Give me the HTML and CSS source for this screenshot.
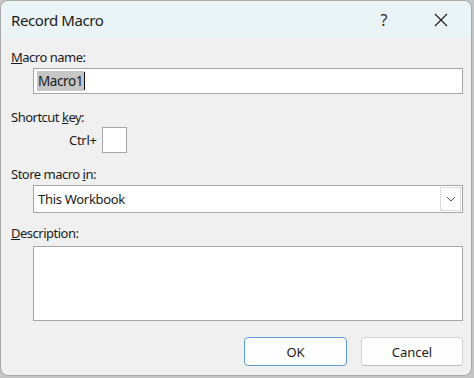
FILE: index.html
```html
<!DOCTYPE html>
<html>
<head>
<meta charset="utf-8">
<link rel="stylesheet" href="styles.css">
</head>
<body>
<div class="window">
  <div class="titlebar">
    <span class="title">Record Macro</span>
    <span class="help">?</span>
    <span class="close">
      <svg width="14" height="14" viewBox="0 0 14 14"><path d="M1 1 L13 13 M13 1 L1 13" stroke="#1f1f1f" stroke-width="1.2" fill="none"/></svg>
    </span>
  </div>
  <div class="content">
    <div class="label l-name"><u>M</u>acro name:</div>
    <div class="field f-name"><span class="sel">Macro1</span><span class="caret"></span></div>
    <div class="label l-key">Shortcut <u>k</u>ey:</div>
    <div class="ctrl-row"><span class="ctrl">Ctrl+</span><span class="keybox"></span></div>
    <div class="label l-store">Store macro <u>i</u>n:</div>
    <div class="field f-store"><span class="val">This Workbook</span>
      <span class="drop"><svg width="10" height="6" viewBox="0 0 10 6"><path d="M1 1 L5 5 L9 1" stroke="#555" stroke-width="1" fill="none"/></svg></span>
    </div>
    <div class="label l-desc"><u>D</u>escription:</div>
    <div class="area"></div>
    <div class="buttons">
      <div class="btn ok">OK</div>
      <div class="btn">Cancel</div>
    </div>
  </div>
</div>
</body>
</html>
```

FILE: styles.css
```css
* { box-sizing: border-box; }
html, body { margin: 0; padding: 0; }
body {
  width: 474px; height: 378px;
  background: #c4c4c4;
  font-family: "Noto Sans", "Open Sans", sans-serif;
  color: #1b1b1b;
}
.window {
  width: 472px; height: 376px;
  border: 1px solid #a8a8a8;
  border-radius: 8px;
  overflow: hidden;
  background: #f0f0f0;
  display: flex; flex-direction: column;
}
.titlebar {
  height: 37px;
  flex: none;
  background: #eaf4f7;
  display: flex; align-items: center;
  padding-left: 10px;
}
.title { font-size: 15px; flex: 1; letter-spacing: -0.4px; }
.help { font-size: 16px; width: 20px; text-align: center; margin-right: 37px; color: #2a2a2a; }
.close { width: 40px; display: flex; justify-content: flex-start; }
.close svg { margin-left: 3px; }
.content {
  padding: 11px 8px 0 10px;
  font-size: 13px;
  line-height: 16px;
}
.label { height: 16px; letter-spacing: -0.5px; }
.field {
  margin-left: 22px;
  background: #fff;
  border: 1px solid #a6a6a6;
  display: flex; align-items: center;
}
.f-name { margin-top: 3px; height: 26px; padding-left: 3px; }
.sel { background: #c6c6c6; padding: 1px 1px 1px 1px; line-height: 18px; font-size: 13.5px; letter-spacing: -0.4px; }
.caret { width: 1px; height: 18px; background: #111; }
.l-key { margin-top: 15px; }
.ctrl-row { display: flex; align-items: center; margin-top: 2px; padding-left: 58px; height: 26px; }
.ctrl { font-size: 13px; margin-right: 5px; letter-spacing: -0.3px; }
.keybox { width: 25px; height: 26px; background: #fff; border: 1px solid #a6a6a6; }
.l-store { margin-top: 13px; }
.f-store { margin-top: 3px; height: 28px; padding-left: 4px; }
.val { flex: 1; font-size: 13px; letter-spacing: -0.3px; }
.drop {
  width: 21px; height: 24px; margin-right: 1px;
  border: 1px solid #dcdcdc;
  display: flex; align-items: center; justify-content: center;
}
.l-desc { margin-top: 12px; }
.area {
  margin-left: 22px; margin-top: 5px;
  height: 75px;
  background: #fff;
  border: 1px solid #a6a6a6;
}
.buttons {
  display: flex; justify-content: flex-end; gap: 14px;
  margin-top: 16px;
}
.btn {
  width: 102px; height: 29px;
  background: #fdfdfd;
  border: 1px solid #d2d2d2;
  border-bottom-color: #bcbcbc;
  border-radius: 4px;
  display: flex; align-items: center; justify-content: center;
  font-size: 13px;
}
.btn.ok { border: 1px solid #5e9ed6; width: 103px; }
```
